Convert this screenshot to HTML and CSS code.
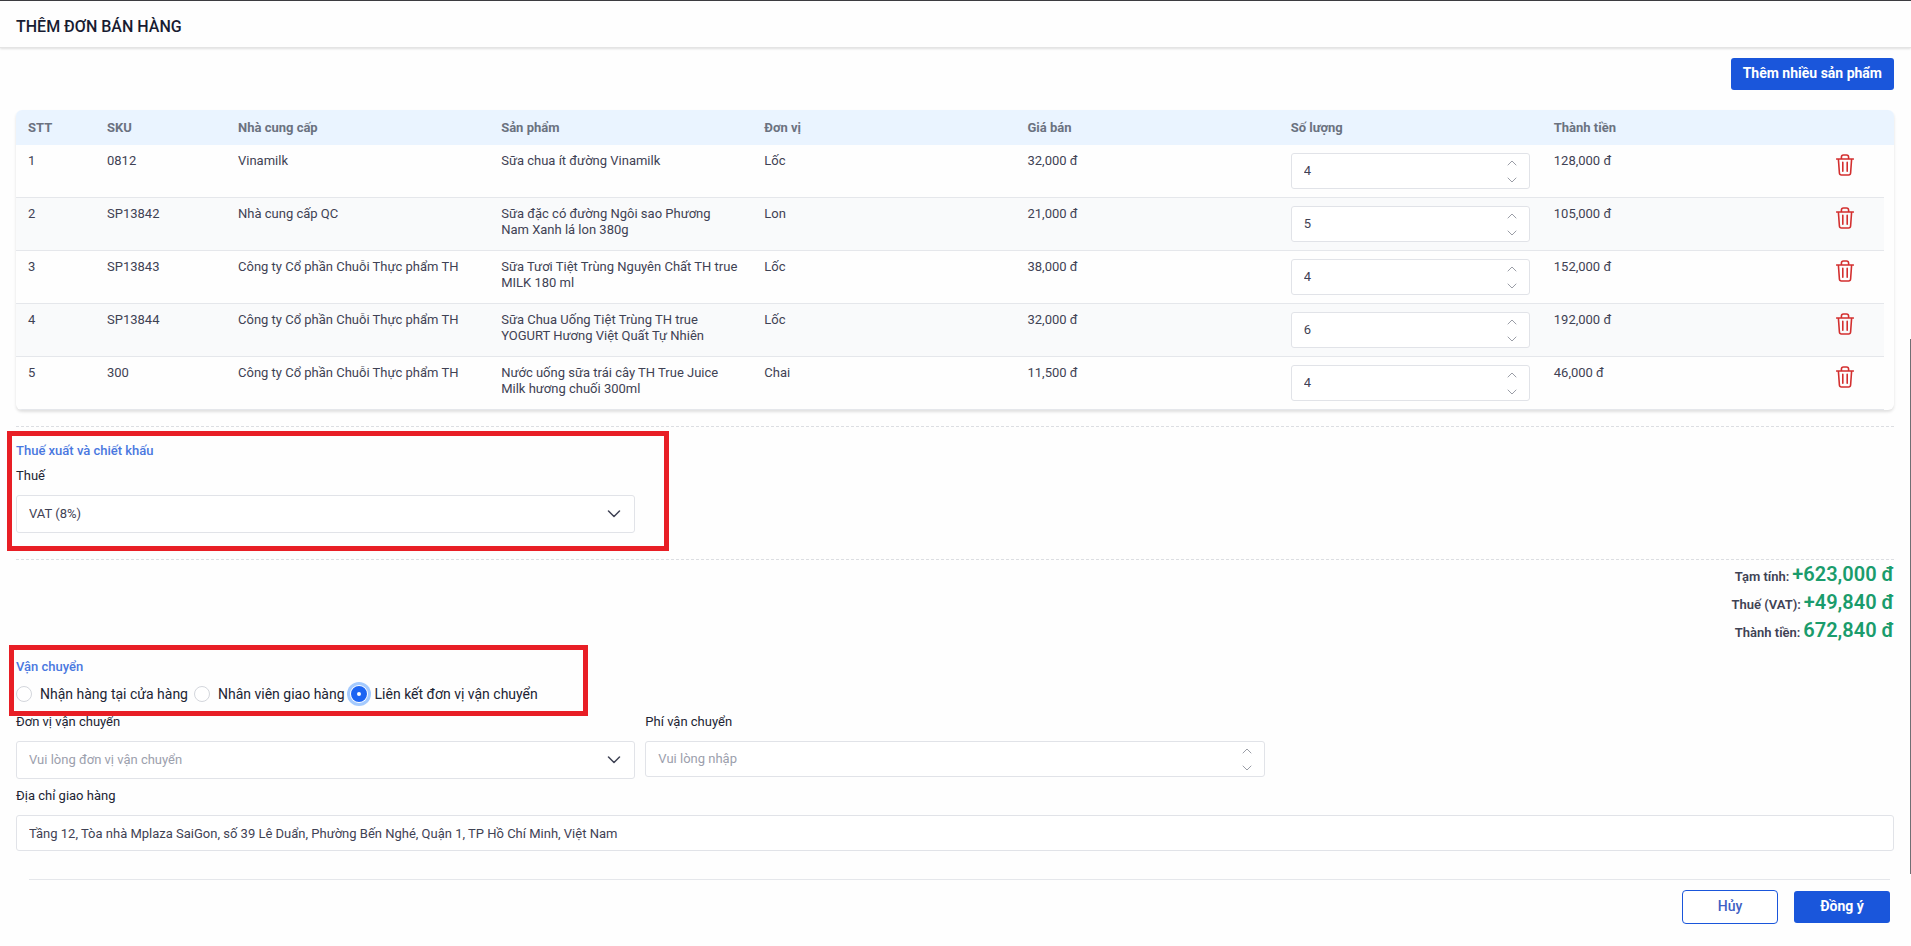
FILE: index.html
```html
<!DOCTYPE html>
<html lang="vi">
<head>
<meta charset="utf-8">
<meta name="viewport" content="width=device-width, initial-scale=1">
<title>Thêm đơn bán hàng</title>
<link rel="stylesheet" href="styles.css">
</head>
<body>
<svg class="sprite" aria-hidden="true">
  <symbol id="i-trash" viewBox="0 0 18 22">
    <path d="M0.6 5h16.8M2.4 5.2l1 13.8c.1 1.2.8 2 2 2h7.2c1.2 0 1.9-.8 2-2l1-13.8M5.4 4.8V3.2c0-1.300.8-2.200 2.100-2.200h3c1.300 0 2.100.9 2.100 2.200v1.600M6.800 8.400v8.800M11.200 8.400v8.800"/>
  </symbol>
  <symbol id="i-up" viewBox="0 0 10 6"><path d="M1 5l4-4 4 4"/></symbol>
  <symbol id="i-down" viewBox="0 0 10 6"><path d="M1 1l4 4 4-4"/></symbol>
  <symbol id="i-chevron" viewBox="0 0 14 8"><path d="M1.500 1L7 6.500 12.500 1"/></symbol>
</svg>

<header class="page-header">
  <h1 class="page-title">THÊM ĐƠN BÁN HÀNG</h1>
</header>

<main class="page-body">
  <div class="toolbar">
    <button type="button" class="btn btn-primary btn-add">Thêm nhiều sản phẩm</button>
  </div>

  <div class="table-card">
    <table class="products">
      <colgroup>
        <col class="c-small"><col class="c-sku"><col><col><col><col><col><col><col class="c-small"><col class="c-gutter">
      </colgroup>
      <thead>
        <tr>
          <th>STT</th><th>SKU</th><th>Nhà cung cấp</th><th>Sản phẩm</th><th>Đơn vị</th><th>Giá bán</th><th>Số lượng</th><th>Thành tiền</th><th></th><th class="gutter"></th>
        </tr>
      </thead>
      <tbody>
        <tr>
          <td>1</td><td>0812</td><td>Vinamilk</td><td>Sữa chua ít đường Vinamilk</td><td>Lốc</td><td>32,000 đ</td>
          <td><div class="number"><input type="number" value="4" aria-label="Số lượng 1"><span class="steps"><button type="button" aria-label="Tăng"><svg><use href="#i-up"/></svg></button><button type="button" aria-label="Giảm"><svg><use href="#i-down"/></svg></button></span></div></td>
          <td>128,000 đ</td><td class="action"><button type="button" class="trash" aria-label="Xóa"><svg><use href="#i-trash"/></svg></button></td><td class="gutter"></td>
        </tr>
        <tr>
          <td>2</td><td>SP13842</td><td>Nhà cung cấp QC</td><td>Sữa đặc có đường Ngôi sao Phương Nam Xanh lá lon 380g</td><td>Lon</td><td>21,000 đ</td>
          <td><div class="number"><input type="number" value="5" aria-label="Số lượng 2"><span class="steps"><button type="button" aria-label="Tăng"><svg><use href="#i-up"/></svg></button><button type="button" aria-label="Giảm"><svg><use href="#i-down"/></svg></button></span></div></td>
          <td>105,000 đ</td><td class="action"><button type="button" class="trash" aria-label="Xóa"><svg><use href="#i-trash"/></svg></button></td><td class="gutter"></td>
        </tr>
        <tr>
          <td>3</td><td>SP13843</td><td>Công ty Cổ phần Chuỗi Thực phẩm TH</td><td>Sữa Tươi Tiệt Trùng Nguyên Chất TH true MILK 180 ml</td><td>Lốc</td><td>38,000 đ</td>
          <td><div class="number"><input type="number" value="4" aria-label="Số lượng 3"><span class="steps"><button type="button" aria-label="Tăng"><svg><use href="#i-up"/></svg></button><button type="button" aria-label="Giảm"><svg><use href="#i-down"/></svg></button></span></div></td>
          <td>152,000 đ</td><td class="action"><button type="button" class="trash" aria-label="Xóa"><svg><use href="#i-trash"/></svg></button></td><td class="gutter"></td>
        </tr>
        <tr>
          <td>4</td><td>SP13844</td><td>Công ty Cổ phần Chuỗi Thực phẩm TH</td><td>Sữa Chua Uống Tiệt Trùng TH true YOGURT Hương Việt Quất Tự Nhiên</td><td>Lốc</td><td>32,000 đ</td>
          <td><div class="number"><input type="number" value="6" aria-label="Số lượng 4"><span class="steps"><button type="button" aria-label="Tăng"><svg><use href="#i-up"/></svg></button><button type="button" aria-label="Giảm"><svg><use href="#i-down"/></svg></button></span></div></td>
          <td>192,000 đ</td><td class="action"><button type="button" class="trash" aria-label="Xóa"><svg><use href="#i-trash"/></svg></button></td><td class="gutter"></td>
        </tr>
        <tr>
          <td>5</td><td>300</td><td>Công ty Cổ phần Chuỗi Thực phẩm TH</td><td>Nước uống sữa trái cây TH True Juice Milk hương chuối 300ml</td><td>Chai</td><td>11,500 đ</td>
          <td><div class="number"><input type="number" value="4" aria-label="Số lượng 5"><span class="steps"><button type="button" aria-label="Tăng"><svg><use href="#i-up"/></svg></button><button type="button" aria-label="Giảm"><svg><use href="#i-down"/></svg></button></span></div></td>
          <td>46,000 đ</td><td class="action"><button type="button" class="trash" aria-label="Xóa"><svg><use href="#i-trash"/></svg></button></td><td class="gutter"></td>
        </tr>
      </tbody>
    </table>
  </div>

  <section class="section tax">
    <div class="marker marker-tax"></div>
    <h2 class="section-title">Thuế xuất và chiết khấu</h2>
    <div class="form-grid">
      <div class="field">
        <label for="tax">Thuế</label>
        <div class="select"><select id="tax"><option>VAT (8%)</option></select><svg><use href="#i-chevron"/></svg></div>
      </div>
    </div>
  </section>

  <section class="section totals">
    <p>Tạm tính: <strong>+623,000 đ</strong></p>
    <p>Thuế (VAT): <strong>+49,840 đ</strong></p>
    <p>Thành tiền: <strong>672,840 đ</strong></p>
  </section>

  <section class="shipping">
    <div class="marker marker-shipping"></div>
    <h2 class="section-title">Vận chuyển</h2>
    <div class="radios">
      <label><input type="radio" name="ship">Nhận hàng tại cửa hàng</label>
      <label><input type="radio" name="ship">Nhân viên giao hàng</label>
      <label><input type="radio" name="ship" checked>Liên kết đơn vị vận chuyển</label>
    </div>
    <div class="form-grid">
      <div class="field">
        <label for="carrier">Đơn vị vận chuyển</label>
        <div class="select empty"><select id="carrier"><option>Vui lòng đơn vị vận chuyển</option></select><svg><use href="#i-chevron"/></svg></div>
      </div>
      <div class="field">
        <label for="fee">Phí vận chuyển</label>
        <div class="number"><input type="number" id="fee" placeholder="Vui lòng nhập"><span class="steps"><button type="button" aria-label="Tăng"><svg><use href="#i-up"/></svg></button><button type="button" aria-label="Giảm"><svg><use href="#i-down"/></svg></button></span></div>
      </div>
      <div class="field wide">
        <label for="address">Địa chỉ giao hàng</label>
        <input class="text" type="text" id="address" value="Tầng 12, Tòa nhà Mplaza SaiGon, số 39 Lê Duẩn, Phường Bến Nghé, Quận 1, TP Hồ Chí Minh, Việt Nam">
      </div>
    </div>
  </section>
</main>

<footer class="page-footer">
  <button type="button" class="btn btn-outline">Hủy</button>
  <button type="button" class="btn btn-primary">Đồng ý</button>
</footer>
<div class="scroll-thumb"></div>
</body>
</html>
```
FILE: styles.css
```css
* {
  box-sizing: border-box;
}

body {
  position: relative;
  min-height: 100vh;
  margin: 0;
  background: #fefefe;
  color: #3f4254;
  font-family: Roboto, "Liberation Sans", sans-serif;
  font-size: 13px;
  line-height: 16px;
}

button,
input,
select {
  font: inherit;
  color: inherit;
}

h1,
h2,
p {
  margin: 0;
}

svg {
  display: block;
  fill: none;
  stroke: currentColor;
  stroke-linecap: round;
  stroke-linejoin: round;
}

.sprite {
  display: none;
}

.page-header {
  padding: 15px 16px 9px;
  border-top: 1px solid #3c3c40;
  border-bottom: 1px solid #e4e4e4;
  box-shadow: 0 1px 2px rgba(0, 0, 0, 0.12);
}

.page-title {
  color: #181c32;
  font-size: 16px;
  font-weight: 500;
  line-height: 22px;
}

.page-body {
  padding: 10px 17px 0 16px;
}

.toolbar {
  display: flex;
  justify-content: flex-end;
  margin-bottom: 20px;
}

.btn {
  min-width: 96px;
  height: 32px;
  padding: 0 12px 2px;
  border: 0;
  border-radius: 3px;
  font-size: 14px;
  font-weight: 500;
}

.btn-primary {
  background: #1a56db;
  color: #fff;
  font-weight: 700;
}

.btn-outline {
  height: 34px;
  border: 1px solid #1a56db;
  border-radius: 4px;
  background: #fff;
  color: #3f5fc4;
}

.table-card {
  overflow: hidden;
  border-radius: 6px;
  box-shadow: 0 2px 3px rgba(0, 0, 0, 0.12);
}

.products {
  width: 100%;
  table-layout: fixed;
  border-collapse: separate;
  border-spacing: 0;
}

.c-small {
  width: 79px;
}

.c-sku {
  width: 131px;
}

.c-gutter {
  width: 10px;
}

.products th {
  height: 35px;
  padding: 0 12px;
  background: #eaf4ff;
  color: #6b7280;
  font-weight: 700;
  text-align: left;
}

.products td {
  padding: 8px 12px;
  border-bottom: 1px solid #e5e7eb;
  vertical-align: top;
}

.products tbody tr:nth-child(even) td {
  background: #f9fafb;
}

.products .gutter,
.products tbody tr:nth-child(even) .gutter {
  padding: 0;
}

.products tbody .gutter,
.products tbody tr:nth-child(even) .gutter {
  border: 0;
  background: none;
}

.number {
  display: flex;
  height: 36px;
  border: 1px solid #e1e3e8;
  border-radius: 3px;
  background: #fff;
}

.number input {
  flex: 1;
  min-width: 0;
  padding: 0 12px;
  border: 0;
  background: none;
  outline: 0;
  appearance: textfield;
}

.number input::-webkit-inner-spin-button {
  display: none;
}

.steps {
  display: flex;
  flex-direction: column;
  width: 34px;
}

.steps button {
  display: grid;
  flex: 1;
  place-items: center;
  padding: 0;
  border: 0;
  background: none;
  color: #9a9da6;
}

.steps svg {
  width: 10px;
  height: 6px;
}

.action {
  text-align: center;
}

.trash {
  padding: 1px 0;
  border: 0;
  background: none;
  color: #d32f2f;
}

.trash svg {
  width: 18px;
  height: 22px;
  stroke-width: 1.6;
}

.section {
  border-top: 1px dashed #dcdee2;
}

.tax {
  position: relative;
  margin-top: 16px;
  padding: 16px 0 26px;
}

.section-title {
  color: #4a78e0;
  font-size: 13px;
  font-weight: 500;
  line-height: 16px;
}

.form-grid {
  display: grid;
  grid-template-columns: repeat(3, 1fr);
  gap: 9px 10px;
}

.tax .form-grid {
  margin-top: 9px;
}

.field {
  min-width: 0;
}

.field label {
  display: block;
  margin-bottom: 11px;
  color: #212433;
}

.wide {
  grid-column: 1 / -1;
}

.select {
  display: grid;
  align-items: center;
}

.select select,
.select svg {
  grid-area: 1 / 1;
}

.select select {
  width: 100%;
  height: 38px;
  padding: 0 12px;
  border: 1px solid #e1e3e8;
  border-radius: 3px;
  background: #fff;
  appearance: none;
}

.select.empty select,
.number input::placeholder {
  color: #9ca0ad;
}

.select svg {
  justify-self: end;
  width: 14px;
  height: 8px;
  margin-right: 14px;
  stroke-width: 1.5;
  pointer-events: none;
}

.text {
  width: 100%;
  height: 36px;
  padding: 0 12px;
  border: 1px solid #e1e3e8;
  border-radius: 3px;
  background: #fff;
}

.totals p {
  display: flex;
  align-items: baseline;
  justify-content: flex-end;
  gap: 3px;
  height: 28px;
  font-weight: 600;
  line-height: 28px;
}

.totals strong {
  color: #1a9c6c;
  font-size: 20px;
  font-weight: 600;
}

.shipping {
  position: relative;
  margin-top: 15px;
}

.radios {
  display: flex;
  gap: 6px;
  margin: 9px 0 10px;
  color: #212433;
  font-size: 14px;
  line-height: 20px;
}

.radios label {
  display: flex;
  align-items: center;
  gap: 8px;
}

.radios input {
  width: 16px;
  height: 16px;
  margin: 0;
  border: 1px solid #d3d6dc;
  border-radius: 50%;
  background: #fff;
  appearance: none;
}

.radios input:checked {
  border: 6px solid #1c64f2;
  box-shadow: 0 0 0 1px #fff, 0 0 0 4px #a4cafe;
}

.page-footer {
  display: flex;
  justify-content: flex-end;
  gap: 16px;
  align-items: center;
  margin: 28px 21px 0 29px;
  padding-top: 10px;
  border-top: 1px solid #e5e7eb;
}

/* Highlight frames over the form */
.marker {
  position: absolute;
  border: 5px solid #e81e25;
  pointer-events: none;
}

.marker-tax {
  top: 4px;
  left: -9px;
  width: 662px;
  height: 120px;
}

.marker-shipping {
  top: -14px;
  left: -7px;
  width: 579px;
  height: 71px;
}

.scroll-thumb {
  position: absolute;
  top: 339px;
  right: 0;
  width: 1px;
  height: 535px;
  background: #6f6f73;
}
```
